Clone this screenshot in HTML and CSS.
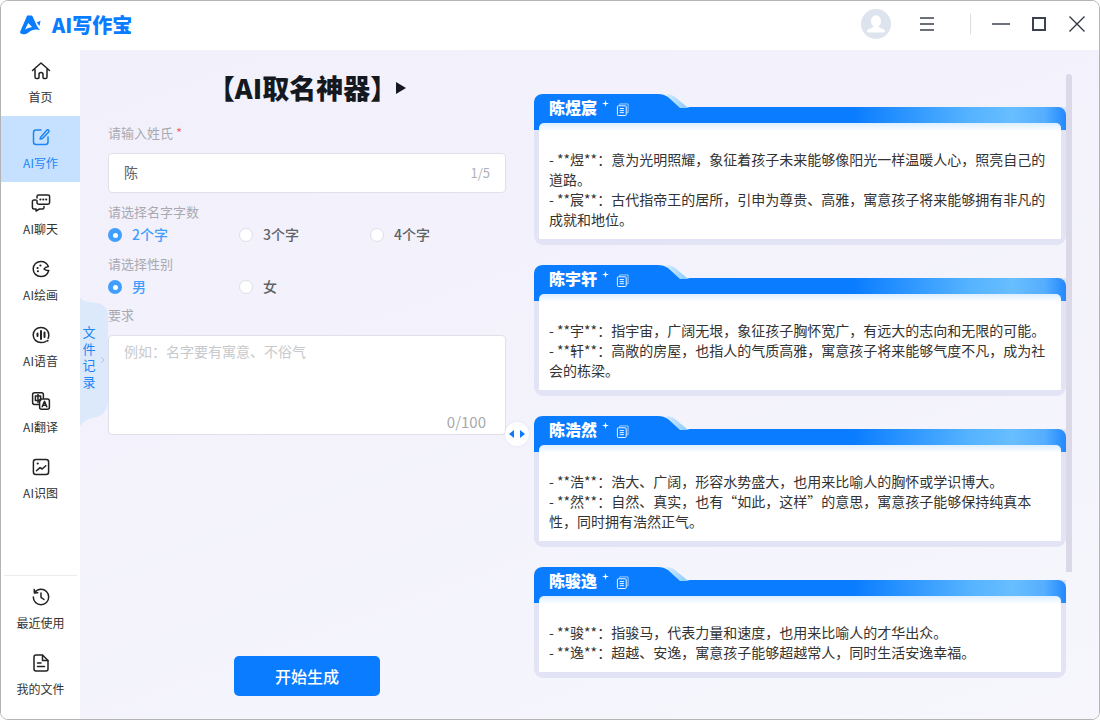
FILE: index.html
```html
<!DOCTYPE html>
<html lang="zh">
<head>
<meta charset="utf-8">
<title>AI写作宝</title>
<link rel="stylesheet" href="styles.css">
</head>
<body>
<svg class="defs" width="0" height="0">
  <defs>
    <linearGradient id="sliver" x1="0" y1="0" x2="1" y2="0">
      <stop offset="0" stop-color="#d6ecff"/>
      <stop offset="1" stop-color="#7cc6ff"/>
    </linearGradient>
    <symbol id="tab" viewBox="0 0 156 14">
      <path d="M132 0 C136 0 138 1 141 3 L153 13 L156 14 L140 14 Z" fill="url(#sliver)"/>
      <path d="M0 14 V9 C0 3 4 0 9 0 H124 C128 0 131 1 134 3 L146 14 Z" fill="#0a7cff"/>
    </symbol>
    <symbol id="copy" viewBox="0 0 14 14">
      <path d="M4 2.5 V1 H13 V10.5 H11.5" fill="none" stroke="#a9d4ff" stroke-width="1"/>
      <rect x="1.5" y="3" width="9.5" height="10.5" rx="1" fill="#0a7cff" stroke="#fff" stroke-width="1"/>
      <path d="M4 6 H8.5 M4 8.2 H8.5 M4 10.4 H8.5" stroke="#fff" stroke-width="1"/>
    </symbol>
    <symbol id="spark" viewBox="0 0 8 8">
      <path d="M4 0 L4.8 3.2 L8 4 L4.8 4.8 L4 8 L3.2 4.8 L0 4 L3.2 3.2 Z" fill="#fff"/>
    </symbol>
  </defs>
</svg>
<div class="window">
  <header class="titlebar">
    <div class="brand">
      <svg class="logo" viewBox="0 0 22 20"><path fill-rule="evenodd" d="M7.5 0 H11.5 C12.5 0 13 .6 13.4 1.4 L18 11.5 L21 15.5 C16.5 14 12.5 15 8.5 18 C5.5 20 2.5 20.4 .5 18.6 C-.2 18 0 17 .6 16 Z M8.6 8 L5.2 15 C7.5 13.4 10 12.4 12.6 12 Z M17.5 7.5 L21.5 5.5 L20.5 11 Z" fill="#0a7cff"/></svg>
      <span class="brand-name">AI写作宝</span>
    </div>
    <div class="win-tools">
      <svg class="avatar" viewBox="0 0 30 30"><circle cx="15" cy="15" r="15" fill="#dde4ed"/><path d="M15 6.5 C18.2 6.5 20 9 20 12 C20 14.5 18.8 16.2 17.6 17 C17.6 18 18.5 18.6 20.5 19.3 C23 20.2 24 21.2 24 22.5 C24 23.2 23.4 23.5 22.5 23.5 H7.5 C6.6 23.5 6 23.2 6 22.5 C6 21.2 7 20.2 9.5 19.3 C11.5 18.6 12.4 18 12.4 17 C11.2 16.2 10 14.5 10 12 C10 9 11.8 6.5 15 6.5 Z" fill="#fff"/></svg>
      <svg class="menu" viewBox="0 0 14 14"><path d="M0 1 H14 M0 7 H14 M0 13 H14" stroke="#3c4250" stroke-width="1.4"/></svg>
      <span class="sep"></span>
      <svg class="min" viewBox="0 0 18 2"><path d="M0 1 H18" stroke="#3c4250" stroke-width="1.6"/></svg>
      <svg class="max" viewBox="0 0 14 14"><rect x="1" y="1" width="12" height="12" fill="none" stroke="#3c4250" stroke-width="2"/></svg>
      <svg class="close" viewBox="0 0 16 16"><path d="M0.5 0.5 L15.5 15.5 M15.5 0.5 L0.5 15.5" stroke="#2c3240" stroke-width="1.3"/></svg>
    </div>
  </header>
  <div class="content">
    <nav class="sidebar">
      <div class="nav-main">
        <a class="nav-item">
          <svg class="nav-icon" viewBox="0 0 20 20"><path d="M1.5 9.5 L10 2 L18.5 9.5 M4 8.5 V16 C4 17 4.6 17.6 5.6 17.6 H7 C7.6 17.6 8 17.2 8 16.6 V13.5 C8 12.3 8.9 11.6 10 11.6 C11.1 11.6 12 12.3 12 13.5 V16.6 C12 17.2 12.4 17.6 13 17.6 H14.4 C15.4 17.6 16 17 16 16 V8.5"/></svg>
          <span>首页</span>
        </a>
        <a class="nav-item active">
          <svg class="nav-icon" viewBox="0 0 20 20"><path d="M10 3 H5 C3.3 3 2.5 3.9 2.5 5.5 V15 C2.5 16.6 3.4 17.5 5 17.5 H14.5 C16.1 17.5 17 16.6 17 15 V10"/><path d="M9.5 10.5 L15.5 3.5 C16.2 2.7 17 2.7 17.6 3.2 C18.2 3.8 18.2 4.5 17.5 5.2 L11.5 11.5 L9.2 12 Z"/></svg>
          <span>AI写作</span>
        </a>
        <a class="nav-item">
          <svg class="nav-icon" viewBox="0 0 20 20"><path d="M6 5 V3.6 C6 2.6 6.7 2 7.6 2 H17 C18 2 18.6 2.7 18.6 3.6 V9.6 C18.6 10.6 18 11.2 17 11.2 H8 C7 11.2 6 10.6 6 9.6 V7.5"/><path d="M5 7 H3 C2 7 1.4 7.7 1.4 8.6 V14.5 C1.4 15.5 2 16 3 16 H5 V18 L8.5 16 H11.5 C12.5 16 13 15.4 13 14.5 V13.5"/><path class="thick" d="M9.3 6.6 H9.5 M12.2 6.6 H12.4 M15.1 6.6 H15.3"/></svg>
          <span>AI聊天</span>
        </a>
        <a class="nav-item">
          <svg class="nav-icon" viewBox="0 0 20 20"><path d="M17.8 11.5 C16.5 15.5 13.5 17.6 10 17.6 C5.6 17.6 2.2 14.2 2.2 10 C2.2 5.7 5.6 2.4 10 2.4 C13.4 2.4 16.2 4.4 17.4 7.5 C15 8 13.5 8.9 13 10 C14.2 11.2 15.8 11.7 17.8 11.5 Z"/><path class="thick" d="M6.5 9 H6.7 M9.3 6.5 H9.5 M6.8 12.3 H7"/></svg>
          <span>AI绘画</span>
        </a>
        <a class="nav-item">
          <svg class="nav-icon" viewBox="0 0 20 20"><path d="M15 16.3 C13.6 17.2 12 17.6 10 17.6 C5.6 17.6 2.2 14.2 2.2 10 C2.2 5.7 5.6 2.4 10 2.4 C14.4 2.4 17.8 5.7 17.8 10 C17.8 11.2 17.6 12.4 17.1 13.4"/><path class="thick" d="M6.5 8.5 V11 M10 6 V14 M13.5 7.5 V12 M16.5 15.8 H16.6"/></svg>
          <span>AI语音</span>
        </a>
        <a class="nav-item">
          <svg class="nav-icon" viewBox="0 0 20 20"><path d="M7.5 13.5 H3.5 C2.4 13.5 1.6 12.7 1.6 11.6 V3.6 C1.6 2.5 2.4 1.8 3.5 1.8 H10.5 C11.6 1.8 12.4 2.5 12.4 3.6 V7"/><path d="M4.4 5 H9.6 V9.4 H4.4 Z M7 3.4 V11.6"/><rect x="8.6" y="8" width="9.8" height="10.2" rx="2"/><path d="M11.2 15.8 L13.5 10.4 L15.8 15.8 M12 14.2 H15"/></svg>
          <span>AI翻译</span>
        </a>
        <a class="nav-item">
          <svg class="nav-icon" viewBox="0 0 20 20"><rect x="2.4" y="2.4" width="15.2" height="15.2" rx="2.5"/><path d="M5.5 13.8 L9 10.6 L11.2 12 L14.8 8.8"/><path class="thick" d="M6.6 6.6 H6.8"/></svg>
          <span>AI识图</span>
        </a>
      </div>
      <div class="nav-foot">
        <a class="nav-item">
          <svg class="nav-icon" viewBox="0 0 20 20"><path d="M3.7 5.5 C5.1 3.5 7.4 2.3 10 2.3 C14.3 2.3 17.7 5.7 17.7 10 C17.7 14.3 14.3 17.7 10 17.7 C5.7 17.7 2.3 14.3 2.3 10"/><path d="M3.2 2.6 L3.4 6 L6.8 5.8"/><path d="M10 6 V10.3 L13 12.5"/></svg>
          <span>最近使用</span>
        </a>
        <a class="nav-item">
          <svg class="nav-icon" viewBox="0 0 20 20"><path d="M11.5 2 H5 C3.8 2 3 2.8 3 4 V16 C3 17.2 3.8 18 5 18 H15 C16.2 18 17 17.2 17 16 V7.5 Z"/><path d="M11.5 2.5 V7.5 H17 M6.5 10 H10 M6.5 13.6 H13.5"/></svg>
          <span>我的文件</span>
        </a>
      </div>
    </nav>
    <main class="main">
      <section class="form">
        <h1 class="title">【AI取名神器】<i class="play"></i></h1>
        <div class="label first">请输入姓氏 <em>*</em></div>
        <div class="field"><span class="value">陈</span><span class="count">1/5</span></div>
        <div class="label">请选择名字字数</div>
        <div class="radios">
          <span class="radio on"><i></i>2个字</span>
          <span class="radio"><i></i>3个字</span>
          <span class="radio"><i></i>4个字</span>
        </div>
        <div class="label">请选择性别</div>
        <div class="radios">
          <span class="radio on"><i></i>男</span>
          <span class="radio"><i></i>女</span>
        </div>
        <div class="label tight">要求</div>
        <div class="area">
          <span class="placeholder">例如：名字要有寓意、不俗气</span>
          <span class="area-count">0/100</span>
        </div>
        <button class="go">开始生成</button>
      </section>
      <section class="results">
        <div class="list">
          <article class="card">
            <div class="band"></div>
            <svg class="tab"><use href="#tab"/></svg>
            <div class="head"><b>陈煜宸</b><svg class="spark"><use href="#spark"/></svg><svg class="copy"><use href="#copy"/></svg></div>
            <div class="body">- **煜**：意为光明照耀，象征着孩子未来能够像阳光一样温暖人心，照亮自己的道路。<br>- **宸**：古代指帝王的居所，引申为尊贵、高雅，寓意孩子将来能够拥有非凡的成就和地位。</div>
          </article>
          <article class="card">
            <div class="band"></div>
            <svg class="tab"><use href="#tab"/></svg>
            <div class="head"><b>陈宇轩</b><svg class="spark"><use href="#spark"/></svg><svg class="copy"><use href="#copy"/></svg></div>
            <div class="body">- **宇**：指宇宙，广阔无垠，象征孩子胸怀宽广，有远大的志向和无限的可能。<br>- **轩**：高敞的房屋，也指人的气质高雅，寓意孩子将来能够气度不凡，成为社会的栋梁。</div>
          </article>
          <article class="card">
            <div class="band"></div>
            <svg class="tab"><use href="#tab"/></svg>
            <div class="head"><b>陈浩然</b><svg class="spark"><use href="#spark"/></svg><svg class="copy"><use href="#copy"/></svg></div>
            <div class="body">- **浩**：浩大、广阔，形容水势盛大，也用来比喻人的胸怀或学识博大。<br>- **然**：自然、真实，也有“如此，这样”的意思，寓意孩子能够保持纯真本性，同时拥有浩然正气。</div>
          </article>
          <article class="card">
            <div class="band"></div>
            <svg class="tab"><use href="#tab"/></svg>
            <div class="head"><b>陈骏逸</b><svg class="spark"><use href="#spark"/></svg><svg class="copy"><use href="#copy"/></svg></div>
            <div class="body">- **骏**：指骏马，代表力量和速度，也用来比喻人的才华出众。<br>- **逸**：超越、安逸，寓意孩子能够超越常人，同时生活安逸幸福。</div>
          </article>
        </div>
        <div class="scrollbar"></div>
      </section>
      <aside class="file-tab">
        <svg class="file-shape" viewBox="0 0 28 128"><path d="M0 0 C3 3 7 4 12 4.5 C22 4.5 28 9 28 18 V102 C28 113 22 119 12 120 C7 121 3 124 0 128 Z" fill="#dbe9fb"/></svg>
        <span class="file-text">文件记录</span>
        <svg class="file-arrow" viewBox="0 0 5 8"><path d="M1 1 L4 4 L1 7" fill="none" stroke="#a9c8ee" stroke-width="1"/></svg>
      </aside>
      <div class="handle">
        <svg viewBox="0 0 16 8"><path d="M5 0 V8 L0 4 Z M11 0 V8 L16 4 Z" fill="#0a7cff"/></svg>
      </div>
    </main>
  </div>
</div>
</body>
</html>
```
FILE: styles.css
```css
* { box-sizing: border-box; }
html, body { margin: 0; padding: 0; background: #fff; }
body { width: 1100px; height: 720px; overflow: hidden; font-family: "Noto Sans CJK SC", "Noto Sans", sans-serif; }
.defs { display: block; width: 0; height: 0; }
.window { width: 1100px; height: 720px; display: flex; flex-direction: column; border: 1px solid #b4b4b4; border-radius: 8px; overflow: hidden; background: #fff; }

.titlebar { height: 49px; flex: none; display: flex; align-items: center; justify-content: space-between; background: #fff; padding-left: 19px; }
.brand { display: flex; align-items: center; gap: 11px; margin-top: -1px; }
.logo { width: 21px; height: 20px; }
.brand-name { color: #0a7cff; font-size: 20px; font-weight: 900; line-height: 24px; }
.win-tools { display: flex; align-items: center; height: 100%; margin-top: -3px; }
.avatar { width: 30px; height: 30px; }
.menu { width: 14px; height: 14px; margin-left: 29px; }
.sep { width: 1px; height: 20px; background: #dcdde2; margin-left: 36px; }
.min { width: 18px; height: 2px; margin-left: 21px; }
.max { width: 14px; height: 14px; margin-left: 22px; }
.close { width: 16px; height: 16px; margin-left: 23px; margin-right: 14px; }

.content { flex: 1; display: flex; min-height: 0; }
.sidebar { width: 79px; flex: none; display: flex; flex-direction: column; justify-content: space-between; background: #fff; }
.nav-item { height: 66px; display: flex; flex-direction: column; align-items: center; color: #333; font-size: 12px; line-height: 18px; padding-top: 11px; }
.nav-item span { margin-top: 7px; }
.nav-icon { width: 20px; height: 20px; fill: none; stroke: #222; stroke-width: 1.5; stroke-linecap: round; stroke-linejoin: round; }
.nav-icon .thick { stroke-width: 2; }
.nav-item.active { background: #c5e1ff; color: #1a85f5; }
.nav-item.active .nav-icon { stroke: #1a85f5; }
.nav-foot { padding-bottom: 11px; border-top: 1px solid #ececf0; margin: 0 3px; }

.main { flex: 1; display: flex; position: relative; background: linear-gradient(160deg, #f2f0fa 0%, #f3f2fc 35%, #f6f6fc 100%); }
.form { width: 398px; margin-left: 28px; flex: none; display: flex; flex-direction: column; padding-top: 23px; padding-bottom: 23px; }
.title { margin: 0 0 1px; height: 30px; display: flex; align-items: center; justify-content: center; color: #14181f; font-size: 27px; font-weight: 900; line-height: 30px; }
.play { width: 0; height: 0; margin-left: -1px; border-left: 10px solid #14181f; border-top: 6px solid transparent; border-bottom: 6px solid transparent; }
.label { color: #a9a9b2; font-size: 13px; line-height: 20px; margin-top: 9px; }
.label em { color: #f56c6c; font-style: normal; }
.label.first { margin-top: 19px; }
.label.tight { margin-top: 8px; }
.field { height: 40px; margin-top: 10px; display: flex; align-items: center; justify-content: space-between; padding: 0 15px 2px; background: #fff; border: 1px solid #dfe0ea; border-radius: 4px; font-size: 14px; }
.value { color: #606266; }
.count { color: #b0b0b6; font-size: 13px; }
.radios { display: grid; grid-template-columns: repeat(3, 131px); margin-top: 2px; height: 21px; }
.radio { display: flex; align-items: center; gap: 10px; color: #606266; font-size: 14px; font-weight: 500; line-height: 20px; height: 20px; }
.radio i { width: 14px; height: 14px; margin-top: 2px; border-radius: 50%; background: #fff; border: 1px solid #dcdfe6; }
.radio.on { color: #409eff; }
.radio.on i { background: #409eff; border: 0; display: flex; align-items: center; justify-content: center; }
.radio.on i::after { content: ""; width: 5px; height: 5px; border-radius: 50%; background: #fff; }
.area { height: 100px; margin-top: 10px; padding: 5px 15px 1px; display: flex; flex-direction: column; justify-content: space-between; background: #fff; border: 1px solid #dfe0ea; border-radius: 4px; }
.placeholder { color: #c8c9cc; font-size: 14px; line-height: 20px; }
.area-count { align-self: flex-end; margin-right: 4px; color: #a9a9ad; font-size: 15px; line-height: 22px; }
.go { width: 146px; height: 40px; margin: auto auto 0; border: 0; border-radius: 5px; background: #0a7cff; color: #fff; font-family: inherit; font-size: 16px; font-weight: 500; padding: 0; }

.results { display: flex; flex: none; margin-left: 28px; align-items: flex-start; padding-top: 44px; }
.list { width: 532px; display: flex; flex-direction: column; gap: 20.5px; }
.card { position: relative; background: linear-gradient(180deg, transparent 13px, #e3e3f6 13px); border-radius: 9px; padding: 29px 5px 5.5px; }
.band { position: absolute; left: 0; right: 0; top: 13px; height: 23px; border-radius: 0 8px 0 0; background: linear-gradient(90deg, #0a7cff 0%, #0a7cff 60%, #55b3ff 82%, #68beff 90%, #55aeff 96%, #2288ff 100%); }
.tab { position: absolute; left: 0; top: 0; width: 156px; height: 14px; }
.head { position: absolute; left: 15px; top: -1px; height: 29px; display: flex; align-items: center; color: #fff; }
.head b { font-size: 16px; font-weight: 900; line-height: 29px; }
.spark { width: 7px; height: 7px; margin-left: 5px; margin-top: -8px; }
.copy { width: 13px; height: 13px; margin-left: 7px; margin-top: 3px; }
.body { position: relative; padding: 26px 15px 10px 10px; border-radius: 5px 5px 0 0; background: linear-gradient(180deg, #dceeff 0, #fff 8px); color: #333; font-size: 14px; line-height: 20px; }
.scrollbar { width: 6px; height: 498px; margin-top: -20px; background: #dbd9e8; border-radius: 3px 3px 0 0; flex: none; }

.file-tab { position: absolute; left: 0; top: 248px; width: 28px; height: 128px; }
.file-shape { position: absolute; inset: 0; width: 28px; height: 128px; }
.file-text { position: absolute; left: 2.5px; top: 26px; width: 14px; color: #1a85f5; font-size: 13px; line-height: 16.5px; }
.file-arrow { position: absolute; left: 20px; top: 58px; width: 5px; height: 8px; }
.handle { position: absolute; left: 425px; top: 372px; width: 24px; height: 24px; border-radius: 50%; background: #fff; display: flex; align-items: center; justify-content: center; box-shadow: 0 0 3px rgba(200,200,230,.4); }
.handle svg { width: 16px; height: 8px; }
```
